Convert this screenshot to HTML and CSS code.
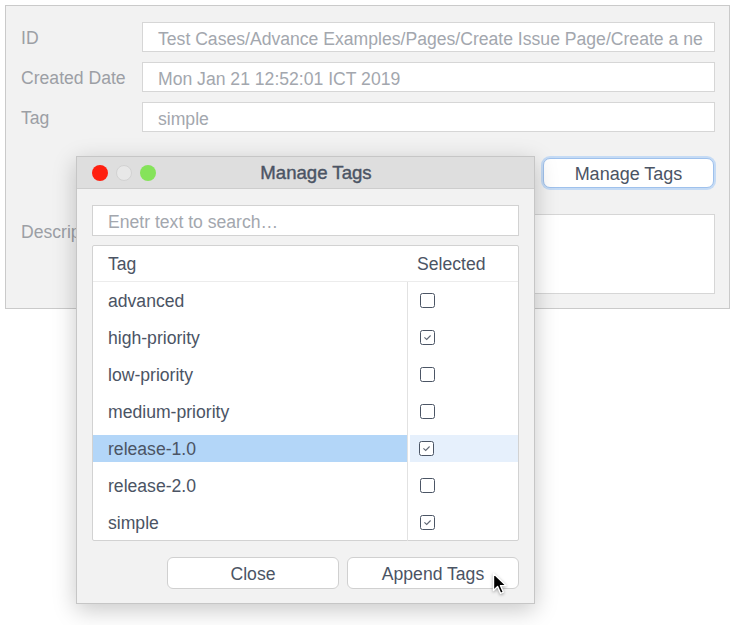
FILE: index.html
```html
<!DOCTYPE html>
<html>
<head>
<meta charset="utf-8">
<link rel="stylesheet" href="styles.css">
</head>
<body>
<div class="window">
  <div class="row">
    <div class="label">ID</div>
    <div class="field">Test Cases/Advance Examples/Pages/Create Issue Page/Create a ne</div>
  </div>
  <div class="row">
    <div class="label">Created Date</div>
    <div class="field">Mon Jan 21 12:52:01 ICT 2019</div>
  </div>
  <div class="row">
    <div class="label">Tag</div>
    <div class="field">simple</div>
  </div>
  <div class="actions">
    <button class="btn focus">Manage Tags</button>
  </div>
  <div class="row desc">
    <div class="label">Description</div>
    <div class="field area"></div>
  </div>
</div>

<div class="dialog">
  <div class="titlebar">
    <div class="lights">
      <span class="light red"></span>
      <span class="light grey"></span>
      <span class="light green"></span>
    </div>
    <div class="title">Manage Tags</div>
  </div>
  <div class="dbody">
    <div class="search">Enetr text to search…</div>
    <div class="table">
      <div class="thead">
        <div class="c1">Tag</div>
        <div class="c2">Selected</div>
      </div>
      <div class="tbody">
        <div class="trow"><div class="c1">advanced</div><div class="c2"><span class="cb"></span></div></div>
        <div class="trow"><div class="c1">high-priority</div><div class="c2"><span class="cb"><svg viewBox="0 0 15 15"><path d="M4.4 7.4 L6.7 9.5 L10.6 5.5" fill="none" stroke="#5f6774" stroke-width="1.1"/></svg></span></div></div>
        <div class="trow"><div class="c1">low-priority</div><div class="c2"><span class="cb"></span></div></div>
        <div class="trow"><div class="c1">medium-priority</div><div class="c2"><span class="cb"></span></div></div>
        <div class="trow sel"><div class="c1">release-1.0</div><div class="c2"><span class="cb"><svg viewBox="0 0 15 15"><path d="M4.4 7.4 L6.7 9.5 L10.6 5.5" fill="none" stroke="#5f6774" stroke-width="1.1"/></svg></span></div></div>
        <div class="trow"><div class="c1">release-2.0</div><div class="c2"><span class="cb"></span></div></div>
        <div class="trow"><div class="c1">simple</div><div class="c2"><span class="cb"><svg viewBox="0 0 15 15"><path d="M4.4 7.4 L6.7 9.5 L10.6 5.5" fill="none" stroke="#5f6774" stroke-width="1.1"/></svg></span></div></div>
      </div>
    </div>
    <div class="dactions">
      <button class="btn dbtn">Close</button>
      <button class="btn dbtn">Append Tags</button>
    </div>
  </div>
</div>

<svg class="cursor" width="20" height="26" viewBox="0 0 20 26">
  <path d="M1.5 1.5 L1.5 18.5 L5.6 14.6 L8.6 21.4 L11.4 20.2 L8.5 13.6 L14 13.6 Z" fill="#000" stroke="#fff" stroke-width="1.4" stroke-linejoin="round"/>
</svg>
</body>
</html>
```

FILE: styles.css
```css
* { box-sizing: border-box; }
html, body { margin: 0; padding: 0; background: #fff; }
body {
  font-family: "Liberation Sans", Arial, sans-serif;
  font-size: 17.6px;
  width: 736px;
  height: 625px;
  position: relative;
  overflow: hidden;
}

.window {
  margin: 5px 0 0 5px;
  width: 725px;
  height: 304px;
  border: 1px solid #cacaca;
  background: #f2f2f2;
  padding: 16px 14px 0 15px;
  display: flex;
  flex-direction: column;
  gap: 10px;
}

.row { display: flex; align-items: center; height: 30px; }
.label { width: 121px; color: #9c9fa5; flex: none; padding-top: 3px; }
.field {
  flex: 1;
  height: 30px;
  background: #fff;
  border: 1px solid #d6d6d6;
  color: #a3a7ae;
  padding: 2px 10px 0 15px;
  line-height: 28px;
  white-space: nowrap;
  overflow: hidden;
}

.actions { display: flex; justify-content: flex-end; margin-top: 16px; padding-right: 1px; }
.btn {
  font-family: inherit;
  font-size: 17.6px;
  background: #fff;
  color: #4b5464;
  border: 1px solid #cfcfcf;
  border-radius: 6px;
  padding: 2px 0 0 0;
}
.focus {
  width: 171px;
  height: 30px;
  border: 1px solid #9fc1ec;
  box-shadow: 0 0 0 2px #c5dbf5;
  border-radius: 7px;
  margin-right: 0;
  font-size: 18px;
}

.desc { height: 80px; align-items: flex-start; margin-top: 16px; }
.desc .label { padding-top: 8px; }
.area { height: 80px; }

.dialog {
  position: absolute;
  left: 76px;
  top: 156px;
  width: 459px;
  height: 448px;
  border: 1px solid #c6c6c6;
  background: #f2f2f2;
  box-shadow: 0 6px 22px rgba(0,0,0,0.22);
  display: flex;
  flex-direction: column;
}
.titlebar {
  height: 32px;
  background: #dedede;
  border-bottom: 1px solid #cdcdcd;
  display: flex;
  align-items: center;
  position: relative;
  flex: none;
}
.lights { display: flex; gap: 8px; padding-left: 15px; }
.light { width: 16px; height: 16px; border-radius: 50%; display: block; }
.red { background: #ff1f0f; }
.grey { background: #e8e8e8; border: 1px solid #d2d2d2; }
.green { background: #85e35a; }
.title {
  position: absolute;
  left: 0; right: 0;
  text-align: center;
  color: #4b5464;
  font-size: 18.6px;
  top: 5px;
  -webkit-text-stroke: 0.4px #4b5464;
  padding-left: 21px;
}

.dbody { padding: 16px 15px 15px 15px; display: flex; flex-direction: column; }
.search {
  height: 31px;
  background: #fff;
  border: 1px solid #d2d2d2;
  color: #a3a7ae;
  padding: 2px 0 0 15px;
  line-height: 29px;
}
.table {
  margin-top: 9px;
  height: 296px;
  background: #fff;
  border: 1px solid #d2d2d2;
  border-radius: 2px;
  color: #4b5464;
}
.thead {
  display: flex;
  height: 36px;
  border-bottom: 1px solid #ececec;
  align-items: center;
  padding-top: 2px;
}
.thead .c1 { width: 315px; padding-left: 15px; }
.thead .c2 { padding-left: 9px; }
.trow { display: flex; height: 37px; }
.trow .c1 {
  width: 315px;
  padding: 1px 0 0 15px;
  margin: 5px 0;
  line-height: 27px;
}
.tbody { position: relative; }
.tbody::before {
  content: "";
  position: absolute;
  left: 314px;
  top: 0; bottom: 0;
  width: 1px;
  background: #e2e2e2;
}
.trow .c2 {
  flex: 1;
  margin: 5px 0 5px 1px;
  display: flex;
  align-items: center;
  padding-left: 11px;
}
.trow.sel .c1 { background: #b3d6f8; width: 314px; margin-right: 1px; }
.trow.sel .c2 { background: #e6f0fc; margin-left: 2px; padding-left: 9px; }
.cb {
  width: 15px;
  height: 15px;
  border: 1.4px solid #4b5565;
  border-radius: 2.5px;
  background: #fff;
  display: block;
  position: relative;
}
.cb svg { position: absolute; left: -1.4px; top: -1.4px; width: 15px; height: 15px; }

.dactions {
  display: flex;
  justify-content: flex-end;
  gap: 8px;
  margin-top: 16px;
}
.dbtn { width: 172px; height: 32px; border-color: #d0d0d0; }

.cursor {
  position: absolute;
  left: 492px;
  top: 572px;
  filter: drop-shadow(0 1px 1.5px rgba(0,0,0,0.35));
}
```
